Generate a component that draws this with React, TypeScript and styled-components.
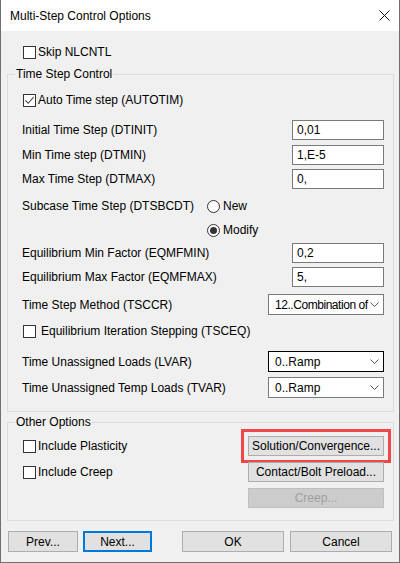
import { FC, ReactNode } from 'react';
import styled, { createGlobalStyle } from 'styled-components';

const GlobalStyle = createGlobalStyle`
  html, body {
    margin: 0;
    padding: 0;
    background: #ffffff;
  }
  body {
    font-family: 'Liberation Sans', Arial, sans-serif;
    font-size: 12px;
    color: #000;
  }
`;

const CheckBox: FC<{ checked?: boolean; gap?: number; children: ReactNode }> = ({ checked, gap = 2, children }) => (
  <CheckWrap>
    <Box>
      {checked && (
        <svg width='11' height='11' viewBox='0 0 11 11'>
          <path d='M1.5 5.5 L4.2 8.3 L9.6 2.2' fill='none' stroke='#4a4a4a' strokeWidth='1.1' />
        </svg>
      )}
    </Box>
    <CheckText $gap={gap}>{children}</CheckText>
  </CheckWrap>
);

const Radio: FC<{ checked?: boolean; children: ReactNode }> = ({ checked, children }) => (
  <CheckWrap>
    <Circle>{checked && <Dot />}</Circle>
    <CheckText $gap={3}>{children}</CheckText>
  </CheckWrap>
);

const Combo: FC<{ value: string; focused?: boolean; tight?: boolean }> = ({ value, focused, tight }) => (
  <Select $focused={focused}>
    <SelectText $tight={tight}>{value}</SelectText>
    <svg width='9' height='5' viewBox='0 0 9 5'>
      <path d='M0.5 0.5 L4.5 4.5 L8.5 0.5' fill='none' stroke='#555' strokeWidth='1' />
    </svg>
  </Select>
);

const App: FC = () => {
  return (
    <>
      <GlobalStyle />
      <Window>
        <TitleBar>
          <span>Multi-Step Control Options</span>
          <svg width='11' height='11' viewBox='0 0 11 11'>
            <path d='M0.5 0.5 L10.5 10.5 M10.5 0.5 L0.5 10.5' stroke='#111' strokeWidth='1' />
          </svg>
        </TitleBar>

        <SkipRow>
          <CheckBox>Skip NLCNTL</CheckBox>
        </SkipRow>

        <Group>
          <Legend>Time Step Control</Legend>
          <Row $mt={8}>
            <CheckSlot>
              <CheckBox checked>Auto Time step (AUTOTIM)</CheckBox>
            </CheckSlot>
          </Row>
          <Row $mt={10}>
            <Label>Initial Time Step (DTINIT)</Label>
            <Input readOnly value='0,01' />
          </Row>
          <Row $mt={5}>
            <Label>Min Time step (DTMIN)</Label>
            <Input readOnly value='1,E-5' />
          </Row>
          <Row $mt={4}>
            <Label>Max Time Step (DTMAX)</Label>
            <Input readOnly value='0,' />
          </Row>
          <Row $mt={7}>
            <Label $w={185}>Subcase Time Step (DTSBCDT)</Label>
            <Radio>New</Radio>
          </Row>
          <Row $mt={4}>
            <Label $w={185} />
            <Radio checked>Modify</Radio>
          </Row>
          <Row $mt={3}>
            <Label>Equilibrium Min Factor (EQMFMIN)</Label>
            <Input readOnly value='0,2' />
          </Row>
          <Row $mt={4}>
            <Label>Equilibrium Max Factor (EQMFMAX)</Label>
            <Input readOnly value='5,' />
          </Row>
          <Row $mt={7} $h={21}>
            <Label>Time Step Method (TSCCR)</Label>
            <Combo value='12..Combination of' tight />
          </Row>
          <Row $mt={6}>
            <CheckSlot>
              <CheckBox gap={5}>Equilibrium Iteration Stepping (TSCEQ)</CheckBox>
            </CheckSlot>
          </Row>
          <Row $mt={10} $h={21}>
            <Label>Time Unassigned Loads (LVAR)</Label>
            <Combo value='0..Ramp' focused />
          </Row>
          <Row $mt={5} $h={21}>
            <Label>Time Unassigned Temp Loads (TVAR)</Label>
            <Combo value='0..Ramp' />
          </Row>
        </Group>

        <Group $mt={2} $pb={12}>
          <Legend>Other Options</Legend>
          <OtherGrid>
            <CheckSlot>
              <CheckBox>Include Plasticity</CheckBox>
            </CheckSlot>
            <Button $highlight>Solution/Convergence...</Button>
            <CheckSlot>
              <CheckBox>Include Creep</CheckBox>
            </CheckSlot>
            <Button>Contact/Bolt Preload...</Button>
            <span />
            <Button disabled>Creep...</Button>
          </OtherGrid>
        </Group>

        <Footer>
          <Button $w={70}>Prev...</Button>
          <Button $w={69} $ml={5} $default>Next...</Button>
          <Button $w={102} $ml={30}>OK</Button>
          <Button $w={102} $ml={6}>Cancel</Button>
        </Footer>
      </Window>
    </>
  );
};

const Window = styled.div`
  width: 400px;
  height: 563px;
  box-sizing: border-box;
  border: 1px solid #707070;
  border-top: none;
  background: #f0f0f0;
  display: flex;
  flex-direction: column;
  overflow: hidden;
`;

const TitleBar = styled.div`
  height: 31px;
  flex: 0 0 31px;
  background: #fff;
  display: flex;
  align-items: center;
  justify-content: space-between;
  padding: 0 9px 0 9px;
  box-sizing: border-box;
`;

const SkipRow = styled.div`
  height: 20px;
  margin-top: 11px;
  padding-left: 22px;
  display: flex;
  align-items: center;
`;

const Group = styled.fieldset<{ $mt?: number; $pb?: number }>`
  margin: ${({ $mt }) => $mt ?? 4}px 5px 0 6px;
  padding: 0 9px ${({ $pb }) => $pb ?? 13}px 14px;
  border: 1px solid #dcdcdc;
  min-width: 0;
`;

const Legend = styled.legend`
  padding: 0 1px;
  margin-left: -7px;
  line-height: 16px;
  height: 16px;
`;

const Row = styled.div<{ $mt: number; $h?: number }>`
  display: flex;
  align-items: center;
  height: ${({ $h }) => $h ?? 20}px;
  margin-top: ${({ $mt }) => $mt}px;
`;

const Label = styled.span<{ $w?: number }>`
  flex: ${({ $w }) => ($w ? `0 0 ${$w}px` : '1 1 auto')};
  white-space: nowrap;
`;

const CheckSlot = styled.div`
  display: flex;
  align-items: center;
  padding-left: 1px;
`;

const CheckWrap = styled.label`
  display: flex;
  align-items: center;
  white-space: nowrap;
`;

const Box = styled.span`
  width: 13px;
  height: 13px;
  box-sizing: border-box;
  border: 1px solid #333;
  background: #fff;
  display: flex;
  align-items: center;
  justify-content: center;
`;

const Circle = styled.span`
  width: 13px;
  height: 13px;
  box-sizing: border-box;
  border: 1px solid #333;
  border-radius: 50%;
  background: #fff;
  display: flex;
  align-items: center;
  justify-content: center;
`;

const Dot = styled.span`
  width: 7px;
  height: 7px;
  border-radius: 50%;
  background: #333;
`;

const CheckText = styled.span<{ $gap: number }>`
  margin-left: ${({ $gap }) => $gap}px;
`;

const Input = styled.input`
  width: 92px;
  height: 20px;
  box-sizing: border-box;
  border: 1px solid #7a7a7a;
  background: #fff;
  padding: 0 4px;
  font: inherit;
  color: #000;
  outline: none;
`;

const Select = styled.div<{ $focused?: boolean }>`
  width: 116px;
  height: 21px;
  box-sizing: border-box;
  border: 1px solid ${({ $focused }) => ($focused ? '#000' : '#7a7a7a')};
  background: #fff;
  display: flex;
  align-items: center;
  padding: 0 4px 0 6px;
  gap: 1px;
`;

const SelectText = styled.span<{ $tight?: boolean }>`
  flex: 1;
  min-width: 0;
  white-space: nowrap;
  letter-spacing: ${({ $tight }) => ($tight ? '-0.45px' : '0')};
`;

const OtherGrid = styled.div`
  display: grid;
  grid-template-columns: 1fr 136px;
  grid-auto-rows: 20px;
  row-gap: 6px;
  margin-top: 6px;
`;

const Button = styled.button<{ $w?: number; $ml?: number; $default?: boolean; $highlight?: boolean }>`
  width: ${({ $w }) => ($w ? `${$w}px` : '100%')};
  height: 100%;
  margin-left: ${({ $ml }) => $ml ?? 0}px;
  box-sizing: border-box;
  padding: 0;
  font: inherit;
  color: #000;
  background: #e1e1e1;
  border: ${({ $default }) => ($default ? '2px solid #0078d7' : '1px solid #adadad')};
  outline: ${({ $highlight }) => ($highlight ? '3px solid #f04848' : 'none')};
  outline-offset: 4px;

  &:disabled {
    background: #cccccc;
    border-color: #bfbfbf;
    color: #a0a0a0;
  }
`;

const Footer = styled.div`
  display: flex;
  height: 21px;
  margin-top: 10px;
  padding-left: 7px;
`;

export default App;
